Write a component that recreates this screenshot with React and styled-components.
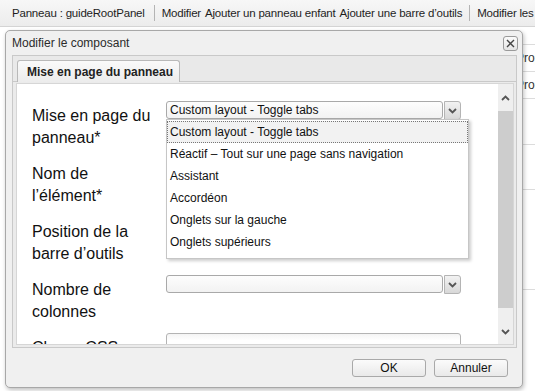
import React from "react";
import styled, { createGlobalStyle } from "styled-components";

const Global = createGlobalStyle`
  html, body { margin: 0; padding: 0; }
  body {
    width: 535px; height: 391px; overflow: hidden;
    background: #ffffff;
    font-family: "Liberation Sans", Arial, sans-serif;
    color: #1a1a1a;
  }
`;

const Page = styled.div`
  position: relative;
  width: 535px;
  height: 391px;
  overflow: hidden;
  background: #ffffff;
`;

const Toolbar = styled.div`
  height: 27px;
  box-sizing: border-box;
  display: flex;
  align-items: center;
  padding-left: 12px;
  background: linear-gradient(#f7f7f7, #ececec);
  border-bottom: 1px solid #d4d4d4;
  font-size: 11.5px;
  letter-spacing: -0.2px;
  white-space: nowrap;
  color: #1e1e1e;
`;

const ToolItem = styled.span`
  margin-right: ${(p) => p.$gap ?? 4}px;
`;

const ToolSep = styled.span`
  flex: none;
  width: 1px;
  height: 16px;
  background: #b4b4b4;
  margin: 0 7px 0 3px;
`;

const BgRows = styled.div`
  display: flex;
  flex-direction: column;
  padding-left: 516px;
  font-size: 12px;
  color: #333;
`;

const BgRow = styled.div`
  height: ${(p) => p.$h}px;
  box-sizing: border-box;
  border-bottom: 1px solid #dcdcdc;
  display: flex;
  align-items: center;
  white-space: nowrap;
`;

const Dialog = styled.div`
  position: absolute;
  left: 5px;
  top: 30px;
  width: 518px;
  height: 358px;
  box-sizing: border-box;
  border: 1px solid #a8a8a8;
  border-radius: 5px;
  background: #f0f0f0;
  box-shadow: 1px 2px 4px rgba(0, 0, 0, 0.25);
  display: flex;
  flex-direction: column;
`;

const Header = styled.div`
  height: 24px;
  display: flex;
  align-items: center;
  justify-content: space-between;
  padding: 0 4px 0 6px;
  font-size: 12px;
  color: #2b2b2b;
`;

const CloseBtn = styled.div`
  width: 13px;
  height: 13px;
  border: 1px solid #9a9a9a;
  border-radius: 3px;
  background: linear-gradient(#fbfbfb, #e4e4e4);
  display: flex;
  align-items: center;
  justify-content: center;
  margin-top: 1px;
`;

const TabPanel = styled.div`
  margin: 0 5px 0 6px;
  height: 293px;
  box-sizing: border-box;
  border: 1px solid #c9c9c9;
  display: flex;
  flex-direction: column;
  background: #ebebeb;
`;

const TabStrip = styled.div`
  height: 25px;
  display: flex;
  align-items: flex-end;
  padding-left: 4px;
  border-bottom: 1px solid #c9c9c9;
  background: #e9e9e9;
`;

const Tab = styled.div`
  width: 163px;
  height: 22px;
  box-sizing: border-box;
  border: 1px solid #b9b9b9;
  border-bottom: none;
  border-radius: 3px 3px 0 0;
  background: linear-gradient(#fafafa, #ececec);
  font-size: 12px;
  font-weight: bold;
  color: #222;
  display: flex;
  align-items: center;
  padding-left: 9px;
  margin-bottom: -1px;
`;

const Body = styled.div`
  flex: 1;
  display: flex;
  margin: 1px 2px 2px 3px;
  border: 1px solid #d6d6d6;
  min-height: 0;
`;

const Scroller = styled.div`
  flex: 1;
  background: #ffffff;
  overflow: hidden;
  padding: 17px 0 0 15px;
  display: flex;
  flex-direction: column;
  gap: 10px;
`;

const Row = styled.div`
  display: flex;
  align-items: flex-start;
`;

const Label = styled.div`
  width: 134px;
  flex: none;
  padding-top: 4px;
  font-size: 16px;
  line-height: 22px;
  color: #111;
`;

const Control = styled.div`
  position: relative;
  display: flex;
`;

const SelectBox = styled.div`
  width: 277px;
  height: 18px;
  box-sizing: border-box;
  border: 1px solid #a9a9a9;
  border-radius: 3px;
  background: linear-gradient(#fdfdfd, #f2f2f2);
  font-size: 12px;
  line-height: 16px;
  padding-left: 3px;
  color: #111;
  white-space: nowrap;
`;

const ArrowBtn = styled.div`
  width: 17px;
  height: 19px;
  box-sizing: border-box;
  margin-left: 1px;
  border: 1px solid #b4b4b4;
  border-radius: 0 3px 3px 0;
  background: linear-gradient(#f2f2f2, #d8d8d8);
  display: flex;
  align-items: center;
  justify-content: center;
`;

const TextInput = styled.div`
  width: 295px;
  height: 18px;
  box-sizing: border-box;
  border: 1px solid #b4b4b4;
  border-radius: 3px;
  background: linear-gradient(#f4f4f4, #ffffff 40%);
`;

const DropList = styled.div`
  position: absolute;
  top: 18px;
  left: 0;
  width: 303px;
  box-sizing: border-box;
  padding: 1px 0 5px;
  background: #ffffff;
  border: 1px solid #c6c6c6;
  box-shadow: 2px 2px 3px rgba(0, 0, 0, 0.2);
  z-index: 5;
`;

const Option = styled.div`
  height: 22px;
  box-sizing: border-box;
  display: flex;
  align-items: center;
  padding-left: 3px;
  font-size: 12px;
  color: #111;
  white-space: nowrap;
  ${(p) =>
    p.$active &&
    `background: #f2f2f2; border: 1px dotted #777; padding-left: 2px;`}
`;

const ScrollBar = styled.div`
  width: 15px;
  flex: none;
  background: #efefef;
  display: flex;
  flex-direction: column;
  align-items: center;
`;

const ScrollArrow = styled.div`
  height: ${(p) => p.$h || 24}px;
  display: flex;
  align-items: center;
  justify-content: center;
`;

const Thumb = styled.div`
  width: 15px;
  height: 197px;
  background: #cdcdcd;
`;

const Track = styled.div`
  flex: 1;
`;

const Footer = styled.div`
  flex: 1;
  display: flex;
  justify-content: flex-end;
  align-items: flex-start;
  padding: 11px 14px 0 0;
  gap: 8px;
`;

const Button = styled.div`
  width: 74px;
  height: 18px;
  box-sizing: border-box;
  border: 1px solid #a9a9a9;
  border-radius: 3px;
  background: linear-gradient(#fbfbfb, #e9e9e9);
  font-size: 12px;
  display: flex;
  align-items: center;
  justify-content: center;
  color: #111;
`;

const Chevron = ({ up, color = "#555" }) => (
  <svg width="9" height="6" viewBox="0 0 9 6">
    <path
      d={up ? "M1 5 L4.5 1.5 L8 5" : "M1 1 L4.5 4.5 L8 1"}
      fill="none"
      stroke={color}
      strokeWidth="1.8"
    />
  </svg>
);

const Select = ({ value, children }) => (
  <Control>
    <SelectBox>{value}</SelectBox>
    <ArrowBtn>
      <Chevron />
    </ArrowBtn>
    {children}
  </Control>
);

const options = [
  "Custom layout - Toggle tabs",
  "Réactif – Tout sur une page sans navigation",
  "Assistant",
  "Accordéon",
  "Onglets sur la gauche",
  "Onglets supérieurs",
];

export default function App() {
  return (
    <Page>
      <Global />
      <Toolbar>
        <ToolItem $gap={6}>Panneau : guideRootPanel</ToolItem>
        <ToolSep />
        <ToolItem>Modifier</ToolItem>
        <ToolItem>Ajouter un panneau enfant</ToolItem>
        <ToolItem>Ajouter une barre d’outils</ToolItem>
        <ToolSep />
        <ToolItem>Modifier les règles</ToolItem>
      </Toolbar>
      <BgRows>
        <BgRow $h={18} />
        <BgRow $h={27}>Propriétés</BgRow>
        <BgRow $h={27}>Propriétés</BgRow>
        <BgRow $h={46} />
        <BgRow $h={45} />
        <BgRow $h={100} />
      </BgRows>
      <Dialog>
        <Header>
          <span>Modifier le composant</span>
          <CloseBtn>
            <svg width="9" height="9" viewBox="0 0 9 9">
              <path d="M1 1 L8 8 M8 1 L1 8" stroke="#444" strokeWidth="1.4" />
            </svg>
          </CloseBtn>
        </Header>
        <TabPanel>
          <TabStrip>
            <Tab>Mise en page du panneau</Tab>
          </TabStrip>
          <Body>
            <Scroller>
              <Row>
                <Label>
                  Mise en page du
                  <br />
                  panneau*
                </Label>
                <Select value="Custom layout - Toggle tabs">
                  <DropList>
                    {options.map((o, i) => (
                      <Option key={o} $active={i === 0}>
                        {o}
                      </Option>
                    ))}
                  </DropList>
                </Select>
              </Row>
              <Row>
                <Label>
                  Nom de
                  <br />
                  l’élément*
                </Label>
                <TextInput />
              </Row>
              <Row>
                <Label>
                  Position de la
                  <br />
                  barre d’outils
                </Label>
                <Select value="" />
              </Row>
              <Row>
                <Label>
                  Nombre de
                  <br />
                  colonnes
                </Label>
                <Select value="" />
              </Row>
              <Row>
                <Label>
                  Classe CSS
                  <br />
                  &nbsp;
                </Label>
                <TextInput />
              </Row>
            </Scroller>
            <ScrollBar>
              <ScrollArrow $h={27}>
                <Chevron up />
              </ScrollArrow>
              <Thumb />
              <Track />
              <ScrollArrow>
                <Chevron />
              </ScrollArrow>
            </ScrollBar>
          </Body>
        </TabPanel>
        <Footer>
          <Button>OK</Button>
          <Button>Annuler</Button>
        </Footer>
      </Dialog>
    </Page>
  );
}
